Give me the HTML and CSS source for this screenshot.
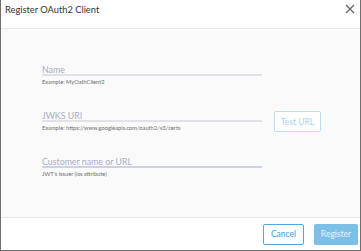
FILE: index.html
```html
<!DOCTYPE html>
<html>
<head>
<meta charset="utf-8">
<link rel="stylesheet" href="styles.css">
</head>
<body>
<div class="dialog">
  <div class="header">
    <span class="title">Register OAuth2 Client</span>
    <button class="close" aria-label="Close">
      <svg width="10" height="10" viewBox="0 0 10 10"><path d="M1 1 L9 9 M9 1 L1 9" stroke="#666" stroke-width="1.3" fill="none"/></svg>
    </button>
  </div>
  <div class="body">
    <div class="field">
      <div class="input">Name</div>
      <div class="help">Example: MyOathClient2</div>
    </div>
    <div class="field row">
      <div class="col">
        <div class="input">JWKS URI</div>
        <div class="help">Example: https://www.googleapis.com/oauth2/v3/certs</div>
      </div>
      <button class="btn-outline test">Test URL</button>
    </div>
    <div class="field">
      <div class="input focus">Customer name or URL</div>
      <div class="help">JWT's issuer (iss attribute)</div>
    </div>
  </div>
  <div class="footer">
    <button class="btn-outline cancel">Cancel</button>
    <button class="btn-primary">Register</button>
  </div>
</div>
</body>
</html>
```
FILE: styles.css
```css
html, body {
  margin: 0;
  padding: 0;
  background: #ffffff;
}
.dialog {
  width: 361px;
  height: 251px;
  box-sizing: border-box;
  border: 1px solid #6f6f6f;
  border-top: none;
  display: flex;
  flex-direction: column;
  font-family: Lato, "Open Sans", sans-serif;
  background: #fff;
}
.header {
  height: 29px;
  box-sizing: border-box;
  flex: none;
  border-bottom: 1px solid #e9e9e9;
  display: flex;
  align-items: flex-start;
  justify-content: space-between;
  padding: 4px 5px 0 4px;
}
.title {
  font-size: 9.3px;
  line-height: 12px;
  color: #333;
}
.close {
  border: none;
  background: none;
  padding: 0;
  width: 10px;
  height: 10px;
  margin-top: 0;
  display: flex;
}
.body {
  flex: 1;
  background: #fafafa;
  border-bottom: 1px solid #e6e6e6;
  padding: 33px 0 0 41px;
  display: flex;
  flex-direction: column;
}
.field {
  width: 220px;
  margin-bottom: 22px;
}
.field.row {
  width: auto;
  display: flex;
  align-items: flex-start;
  gap: 12px;
}
.col {
  width: 220px;
}
.input {
  border-bottom: 2px solid #e0e2e7;
  height: 12px;
  font-size: 8.8px;
  line-height: 15px;
  color: #a6adc4;
  white-space: nowrap;
}
.input.focus {
  border-bottom-color: #cdd1e8;
}
.help {
  font-size: 5.7px;
  color: #6d6d6d;
  margin-top: 2px;
  line-height: 8px;
  white-space: nowrap;
}
.btn-outline {
  font-family: Lato, "Open Sans", sans-serif;
  background: #fff;
  border: 1px solid #4fa8dc;
  color: #3d9ad6;
  font-size: 8.5px;
  border-radius: 2px;
  padding: 0;
  height: 21px;
}
.test {
  width: 47px;
  margin-top: 3px;
  border-color: #b8dff3;
  color: #a6d2ee;
}
.footer {
  height: 32px;
  flex: none;
  display: flex;
  justify-content: flex-end;
  align-items: center;
  gap: 10px;
  padding-right: 2px;
}
.cancel {
  width: 41px;
}
.btn-primary {
  font-family: Lato, "Open Sans", sans-serif;
  width: 44px;
  height: 21px;
  border: none;
  border-radius: 2px;
  background: #7cc0e8;
  color: #e6f3fb;
  font-size: 8.5px;
  padding: 0;
}
```
